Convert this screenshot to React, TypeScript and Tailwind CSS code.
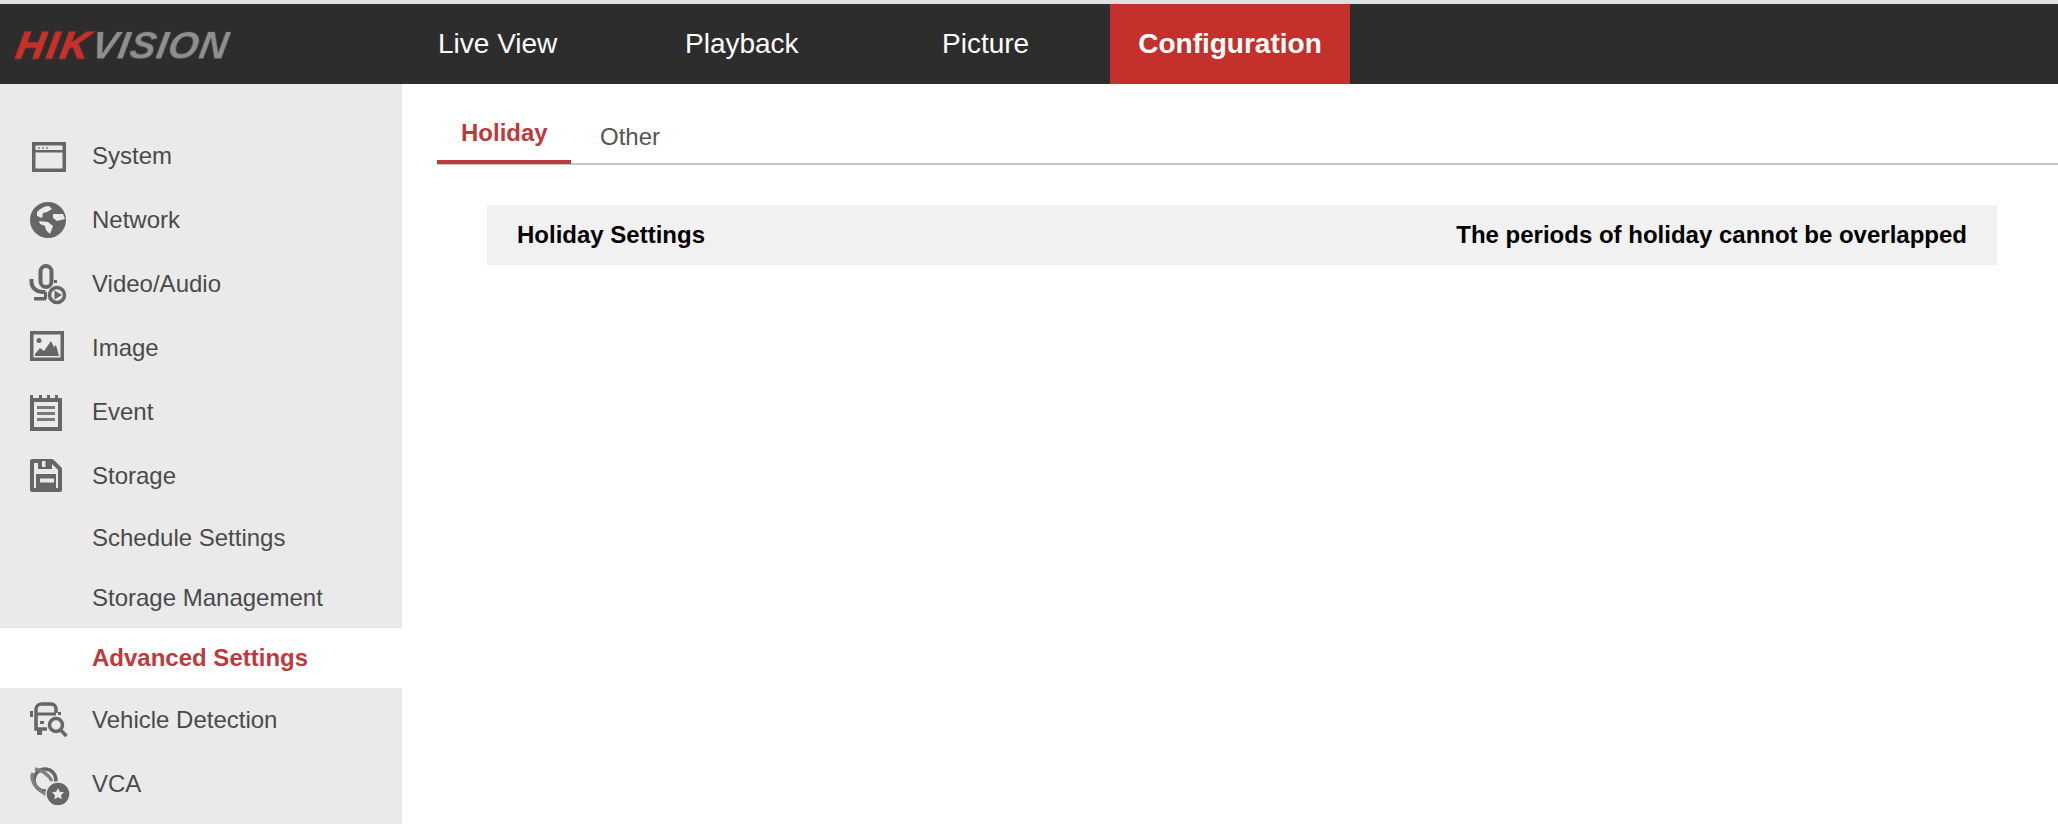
import type { ReactNode } from "react";

const ink = "#666666";
const iconClass = "overflow-visible blur-[0.4px]";

const SystemIcon = () => (
  <svg width="40" height="40" viewBox="0 0 40 40" className={iconClass}>
    <rect x="5.75" y="7.75" width="30.5" height="26.5" fill="none" stroke={ink} strokeWidth="3.5" />
    <rect x="5" y="14" width="32" height="2.5" fill={ink} />
    <rect x="10" y="11" width="2" height="2" fill="#999999" />
    <rect x="14" y="11" width="2" height="2" fill="#999999" />
    <rect x="18" y="11" width="2" height="2" fill="#999999" />
  </svg>
);

const NetworkIcon = () => (
  <svg width="40" height="40" viewBox="0 0 40 40" className={iconClass}>
    <circle cx="20" cy="20" r="18" fill={ink} />
    <path d="M9 12c3-3 7-6 12-6l3 3-5 3-4 1-1 5-5-2zM25 14l10 0 2 5-8 2-4-3zM11 21l9 1 5 4-3 8-4-4-1-4-5-2z" fill="#eaeaea" />
  </svg>
);

const VideoIcon = () => (
  <svg width="40" height="40" viewBox="0 0 40 40" className={iconClass}>
    <rect x="12.5" y="2" width="11" height="21" rx="5.5" fill="none" stroke={ink} strokeWidth="4" />
    <path d="M3.5 15v3c0 6 5 10 12 10h2" fill="none" stroke={ink} strokeWidth="4" />
    <rect x="16" y="28" width="3" height="7" fill={ink} />
    <rect x="6" y="33" width="12" height="3.5" fill={ink} />
    <rect x="26" y="16" width="3" height="3" fill={ink} />
    <circle cx="29" cy="31" r="7.5" fill="#eaeaea" stroke={ink} strokeWidth="3.5" />
    <path d="M26.5 26.5l7.5 4.5-7.5 4.5z" fill={ink} />
  </svg>
);

const ImageIcon = () => (
  <svg width="40" height="40" viewBox="0 0 40 40" className={iconClass}>
    <rect x="3.75" y="4.75" width="30.5" height="26.5" fill="none" stroke={ink} strokeWidth="3.5" />
    <circle cx="11" cy="12.5" r="2.5" fill={ink} />
    <path d="M7 28v-2l5-6 4 3 7-10 3 6 2-2 3 11z" fill={ink} />
  </svg>
);

const EventIcon = () => (
  <svg width="40" height="40" viewBox="0 0 40 40" className={iconClass}>
    <rect x="4" y="8" width="28" height="29" fill="none" stroke={ink} strokeWidth="4" />
    <path d="M2 3h3v6H2zM11 3h3v6h-3zM19 3h3v6h-3zM27 3h3v6h-3z" fill={ink} />
    <path d="M9 14h18v3H9zM9 20h18v3H9zM9 26h18v3H9z" fill="#7a7a7a" />
  </svg>
);

const StorageIcon = () => (
  <svg width="40" height="40" viewBox="0 0 40 40" className={iconClass}>
    <path d="M4 5h20l8 8v21H4z" fill="none" stroke={ink} strokeWidth="4" strokeLinejoin="round" />
    <rect x="10" y="4" width="14" height="9" fill={ink} />
    <rect x="14" y="5" width="3.5" height="6" fill="#eaeaea" />
    <rect x="8" y="18" width="20" height="14" fill={ink} />
    <rect x="12" y="22.5" width="14" height="4" fill="#eaeaea" />
  </svg>
);

const VehicleIcon = () => (
  <svg width="40" height="40" viewBox="0 0 40 40" className={iconClass}>
    <path d="M8 25V9c0-3 3-5 6-5h9c3 0 5 2 5 5v4" fill="none" stroke={ink} strokeWidth="3.5" />
    <path d="M9 14h19" stroke={ink} strokeWidth="3" />
    <path d="M8 24v5h11" fill="none" stroke={ink} strokeWidth="3.5" />
    <path d="M9 29h5v6H9zM2 11h3v6H2zM30 12h3v3h-3zM12 21h4v3h-4z" fill={ink} />
    <circle cx="28" cy="25" r="6.5" fill="none" stroke={ink} strokeWidth="3.5" />
    <path d="M32.5 30l6 6" stroke={ink} strokeWidth="3.5" />
  </svg>
);

const VcaIcon = () => (
  <svg width="40" height="40" viewBox="0 0 40 40" className={iconClass}>
    <circle cx="17" cy="16" r="11" fill="none" stroke={ink} strokeWidth="3.5" />
    <path d="M5 9c-3 6 2 15 11 20l3 2M7 5c7 1 13 5 17 12" fill="none" stroke="#808080" strokeWidth="3.5" />
    <circle cx="30" cy="30" r="12" fill={ink} stroke="#eaeaea" strokeWidth="1.5" />
    <path d="M30 24l1.8 3.8 4.2.5-3 2.9.8 4.1-3.8-2-3.8 2 .8-4.1-3-2.9 4.2-.5z" fill="#eaeaea" />
  </svg>
);

const MenuRow = ({ icon, label }: { icon: ReactNode; label: string }) => (
  <div className="h-16 pl-7 flex items-center gap-6 text-[24px] text-[#4a4a4a]">
    <span className="w-10 h-10 shrink-0">{icon}</span>
    <span>{label}</span>
  </div>
);

const SubRow = ({ label, active }: { label: string; active?: boolean }) => (
  <div
    className={`h-[60px] pl-[92px] flex items-center text-[24px] ${
      active ? "bg-white font-bold text-[#bd3a3c]" : "text-[#4a4a4a]"
    }`}
  >
    {label}
  </div>
);

const navItems = [
  { label: "Live View", width: "w-[247px]" },
  { label: "Playback", width: "w-[257px]" },
  { label: "Picture", width: "w-[168px]" },
];

export default function App() {
  return (
    <div className="h-[824px] overflow-hidden bg-white font-['Liberation_Sans',Arial,sans-serif]">
      <div className="h-1 bg-[#e0e0e0]" />
      <header className="h-20 bg-[#2d2d2d] flex">
        <div className="w-[438px] pl-[17px] flex items-center">
          <span className="inline-block -skew-x-[10deg] italic font-bold text-[39px] leading-none blur-[0.6px]">
            <span className="text-[#c8302a] tracking-[2.6px] [-webkit-text-stroke:1.2px_#c8302a]">HIK</span>
            <span className="text-[#8f8f8f] tracking-[0.8px]">VISION</span>
          </span>
        </div>
        {navItems.map((item) => (
          <div key={item.label} className={`${item.width} flex items-center text-[28px] text-white`}>
            {item.label}
          </div>
        ))}
        <div className="w-60 bg-[#c4302b] flex items-center justify-center text-[28px] font-bold text-white">
          Configuration
        </div>
      </header>
      <div className="flex h-[740px]">
        <aside className="w-[402px] shrink-0 bg-[#eaeaea] pt-10">
          <MenuRow icon={<SystemIcon />} label="System" />
          <MenuRow icon={<NetworkIcon />} label="Network" />
          <MenuRow icon={<VideoIcon />} label="Video/Audio" />
          <MenuRow icon={<ImageIcon />} label="Image" />
          <MenuRow icon={<EventIcon />} label="Event" />
          <MenuRow icon={<StorageIcon />} label="Storage" />
          <SubRow label="Schedule Settings" />
          <SubRow label="Storage Management" />
          <SubRow label="Advanced Settings" active />
          <MenuRow icon={<VehicleIcon />} label="Vehicle Detection" />
          <MenuRow icon={<VcaIcon />} label="VCA" />
        </aside>
        <main className="flex-1 pl-[35px]">
          <div className="h-[81px] flex border-b-2 border-[#c6c6c6] text-[24px]">
            <div className="w-[134px] h-[80px] border-b-4 border-[#bd3a3c] pl-6 pt-[33px] font-bold text-[#bd3a3c] leading-[32px]">
              Holiday
            </div>
            <div className="pl-[29px] pt-[37px] text-[#555555] leading-[32px]">Other</div>
          </div>
          <div className="ml-[50px] mr-[61px] mt-10 h-[60px] px-[30px] bg-[#f1f1f1] flex items-center justify-between text-[24px] font-bold text-black">
            <span>Holiday Settings</span>
            <span>The periods of holiday cannot be overlapped</span>
          </div>
        </main>
      </div>
    </div>
  );
}
